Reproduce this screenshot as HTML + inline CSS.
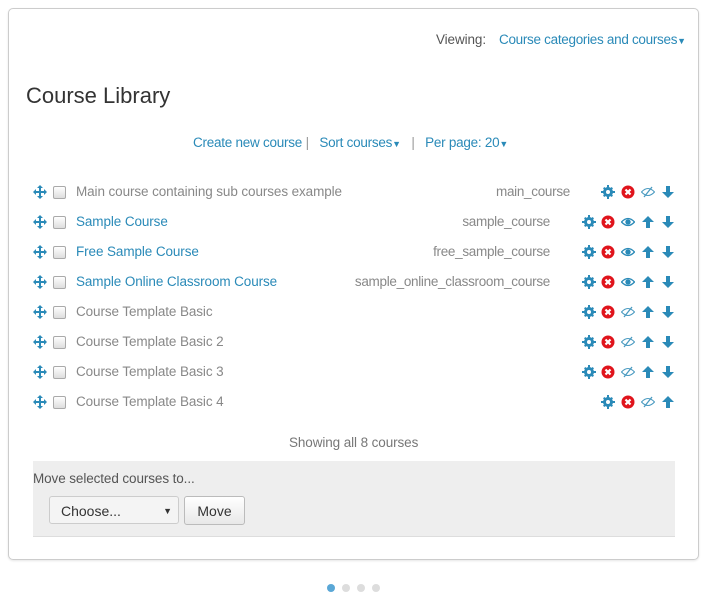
<!DOCTYPE html><html><head><style>
body{margin:0;width:707px;height:592px;background:#fff;font-family:"Liberation Sans",sans-serif;position:relative;overflow:hidden}
.a{position:absolute;white-space:nowrap}
.panel{position:absolute;left:8px;top:8px;width:689px;height:550px;border:1px solid #ccc;border-radius:5px;box-shadow:0 1px 2px rgba(0,0,0,.1)}
.blue{color:#2a8ab8}.grey{color:#888}
.t{font-size:13.5px;letter-spacing:-0.1px}
.cb{position:absolute;width:11px;height:11px;border:1px solid #aaa;border-radius:2px;background:linear-gradient(#fff,#ddd)}
.ic{position:absolute;width:14px;height:14px}
.dot{position:absolute;top:584px;width:8px;height:8px;border-radius:50%;background:#ddd}
</style></head><body>
<div class="panel"></div>
<div class="a t" style="left:436px;top:32px;color:#555">Viewing:</div>
<div class="a t blue" style="left:499px;top:32px;letter-spacing:-0.3px">Course categories and courses<span style="font-size:9px">▼</span></div>
<div class="a" style="left:26px;top:83px;font-size:22px;color:#333">Course Library</div>
<div class="a t" style="left:193px;top:135px;letter-spacing:-0.25px"><span class="blue">Create new course</span> <span style="color:#999">|</span>&nbsp;&nbsp; <span class="blue">Sort courses<span style="font-size:9px">▼</span></span>&nbsp;&nbsp; <span style="color:#999">|</span>&nbsp;&nbsp; <span class="blue">Per page: 20<span style="font-size:9px">▼</span></span></div>
<svg width="0" height="0" style="position:absolute"><defs>
<g id="mv"><path d="M7 0L10 3H8V6H11V4L14 7L11 10V8H8V11H10L7 14L4 11H6V8H3V10L0 7L3 4V6H6V3H4Z" fill="#2a8ab8"/></g>
<g id="gear"><circle cx="7" cy="7" r="5" fill="#2a8ab8"/><path d="M6 0H8V14H6ZM0 6H14V8H0ZM2 3.4L3.4 2L12 10.6L10.6 12ZM10.6 2L12 3.4L3.4 12L2 10.6Z" fill="#2a8ab8"/><circle cx="7" cy="7" r="2" fill="#fff"/></g>
<g id="del"><circle cx="7" cy="7" r="6.5" fill="#e0141c"/><path d="M4.5 4.5L9.5 9.5M9.5 4.5L4.5 9.5" stroke="#fff" stroke-width="2.2"/></g>
<g id="eye"><path d="M0.5 7Q7 0 13.5 7Q7 14 0.5 7Z" fill="none" stroke="#2a8ab8" stroke-width="1.3"/><circle cx="7" cy="7" r="2.7" fill="#2a8ab8"/></g>
<g id="eyes"><path d="M0.5 7Q7 0 13.5 7Q7 14 0.5 7Z" fill="none" stroke="#4a9ac0" stroke-width="1.1"/><path d="M3 12L11 2" stroke="#4a9ac0" stroke-width="1.3"/></g>
<g id="up"><path d="M7 1L13 7H9V13H5V7H1Z" fill="#2a8ab8"/></g>
<g id="dn"><path d="M7 13L13 7H9V1H5V7H1Z" fill="#2a8ab8"/></g>
</defs></svg>
<div id="rows"></div>
<script>
var rows=[["Main course containing sub courses example","main_course",0,"g",["gear","del","eyes","dn"],[608,628,648,668]],
["Sample Course","sample_course",1,"b",["gear","del","eye","up","dn"],[589,608,628,648,668]],
["Free Sample Course","free_sample_course",1,"b",["gear","del","eye","up","dn"],[589,608,628,648,668]],
["Sample Online Classroom Course","sample_online_classroom_course",1,"b",["gear","del","eye","up","dn"],[589,608,628,648,668]],
["Course Template Basic","",0,"g",["gear","del","eyes","up","dn"],[589,608,628,648,668]],
["Course Template Basic 2","",0,"g",["gear","del","eyes","up","dn"],[589,608,628,648,668]],
["Course Template Basic 3","",0,"g",["gear","del","eyes","up","dn"],[589,608,628,648,668]],
["Course Template Basic 4","",0,"g",["gear","del","eyes","up"],[608,628,648,668]]];
var h="";rows.forEach(function(r,i){var y=192+30*i;
h+='<svg class="ic" style="left:33px;top:'+(y-7)+'px"><use href="#mv"/></svg>';
h+='<div class="cb" style="left:53px;top:'+(y-6)+'px"></div>';
h+='<div class="a t '+(r[2]?'blue':'grey')+'" style="left:76px;top:'+(y-8)+'px">'+r[0]+'</div>';
if(r[1])h+='<div class="a t grey" style="right:'+(i==0?137:157)+'px;top:'+(y-8)+'px;letter-spacing:-0.3px">'+r[1]+'</div>';
r[4].forEach(function(n,k){h+='<svg class="ic" style="left:'+(r[5][k]-7)+'px;top:'+(y-7)+'px"><use href="#'+n+'"/></svg>';});});
document.getElementById("rows").innerHTML=h;
</script>
<div class="a t" style="left:289px;top:435px;color:#777">Showing all 8 courses</div>
<div style="position:absolute;left:33px;top:461px;width:642px;height:75px;background:#eee;border-bottom:1px solid #ddd"></div>
<div class="a t" style="left:33px;top:471px;color:#555">Move selected courses to...</div>
<div style="position:absolute;left:49px;top:496px;width:130px;height:28px;border:1px solid #ccc;border-radius:3px;background:#f4f4f4;font-size:14px;color:#333;line-height:28px;box-sizing:border-box;padding-left:11px">Choose...<span style="position:absolute;right:6px;font-size:9px">▼</span></div>
<div style="position:absolute;left:184px;top:496px;width:61px;height:29px;border:1px solid #bbb;border-radius:3px;background:linear-gradient(#fff,#e8e8e8);font-size:14px;color:#333;line-height:29px;text-align:center;box-sizing:border-box">Move</div>
<div class="dot" style="left:327px;background:#5aa7d6"></div><div class="dot" style="left:342px"></div><div class="dot" style="left:357px"></div><div class="dot" style="left:372px"></div>
</body></html>
